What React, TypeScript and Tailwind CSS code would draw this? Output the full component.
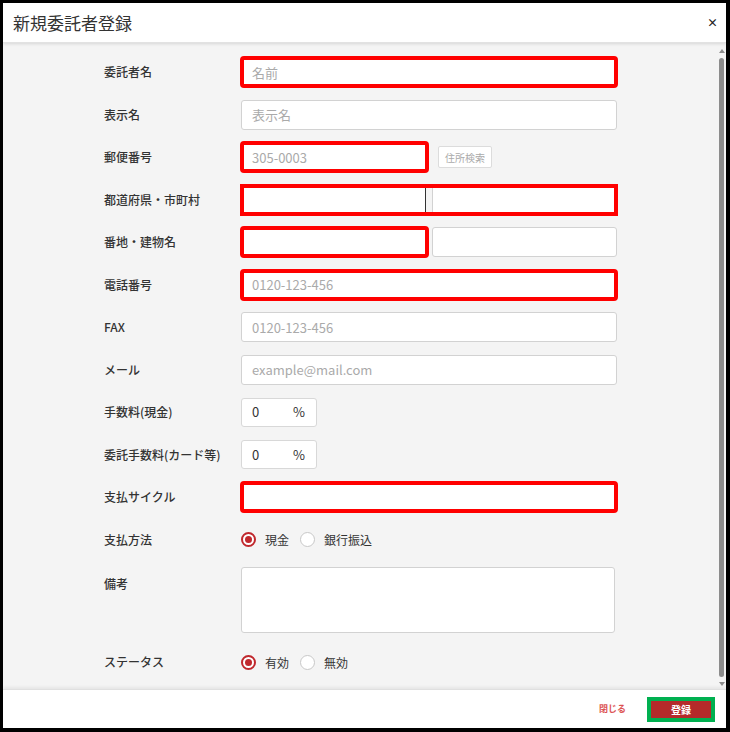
import type { ReactNode } from "react";
import clsx from "clsx";

const field =
  "h-[30px] rounded-[3px] border border-[#d2d2d2] bg-white px-[10px] text-[13px] text-[#333] placeholder:text-[#aaa] outline-none";

const marked = "outline-4 outline-solid outline-[#ff0000] outline-offset-[-3px]";

function Row({ label, children, top }: { label: string; children: ReactNode; top?: boolean }) {
  return (
    <div className={clsx("flex min-h-[30px]", top ? "items-start" : "items-center")}>
      <div
        className={clsx(
          "w-[137px] shrink-0 text-[12px] font-medium text-[#333]",
          top && "pt-[8px]"
        )}
      >
        {label}
      </div>
      {children}
    </div>
  );
}

function Radio({ checked, label }: { checked?: boolean; label: string }) {
  return (
    <label className="flex items-center gap-[9px] text-[12px] text-[#333]">
      <span
        className={clsx(
          "flex h-[15px] w-[15px] items-center justify-center rounded-full bg-white",
          checked ? "border-2 border-[#c0282d]" : "border border-[#c8c8c8]"
        )}
      >
        {checked && <span className="h-[7px] w-[7px] rounded-full bg-[#c0282d]" />}
      </span>
      {label}
    </label>
  );
}

function Percent() {
  return (
    <div className="flex h-[29px] w-[76px] items-center justify-between rounded-[3px] border border-[#d8d8d8] bg-white pl-[10px] pr-[11px] text-[13px] text-[#333]">
      <span>0</span>
      <span>%</span>
    </div>
  );
}

export default function App() {
  return (
    <div className="flex h-[732px] w-[730px] bg-black pb-[4px] pl-[3px] pr-[4px] pt-[3px] font-['Noto_Sans_CJK_JP','Noto_Sans',sans-serif]">
      <div className="flex flex-1 flex-col bg-white">
        {/* header */}
        <div className="relative z-10 flex h-[40px] shrink-0 items-center justify-between border-b border-[#e2e2e2] bg-white pl-[10px] pr-[8px] shadow-[0_1px_3px_rgba(0,0,0,0.12)]">
          <h1 className="text-[17px] text-[#333]">新規委託者登録</h1>
          <span className="text-[11px] font-bold leading-none text-[#222]">×</span>
        </div>

        {/* body */}
        <div className="flex flex-1 overflow-hidden bg-[#f4f4f4]">
          <div className="flex flex-1 flex-col gap-[12.5px] pl-[101px] pt-[14px]">
            <Row label="委託者名">
              <input className={clsx(field, marked, "w-[376px]")} placeholder="名前" />
            </Row>
            <Row label="表示名">
              <input className={clsx(field, "w-[376px]")} placeholder="表示名" />
            </Row>
            <Row label="郵便番号">
              <input className={clsx(field, marked, "w-[187px]")} placeholder="305-0003" />
              <button className="ml-[10px] h-[22px] w-[54px] rounded-[2px] border border-[#dcdcdc] bg-white text-[10px] text-[#aaa]">
                住所検索
              </button>
            </Row>
            <Row label="都道府県・市町村">
              <div className={clsx("flex w-[376px] gap-[6px]", marked)}>
                <input className={clsx(field, "w-[185px] border-r-[#333]")} />
                <input className={clsx(field, "flex-1")} />
              </div>
            </Row>
            <Row label="番地・建物名">
              <div className="flex w-[376px] gap-[4px]">
                <input className={clsx(field, marked, "w-[187px]")} />
                <input className={clsx(field, "flex-1")} />
              </div>
            </Row>
            <Row label="電話番号">
              <input className={clsx(field, marked, "w-[376px]")} placeholder="0120-123-456" />
            </Row>
            <Row label="FAX">
              <input className={clsx(field, "w-[376px]")} placeholder="0120-123-456" />
            </Row>
            <Row label="メール">
              <input className={clsx(field, "w-[376px]")} placeholder="example@mail.com" />
            </Row>
            <Row label="手数料(現金)">
              <Percent />
            </Row>
            <Row label="委託手数料(カード等)">
              <Percent />
            </Row>
            <Row label="支払サイクル">
              <input className={clsx(field, marked, "w-[376px]")} />
            </Row>
            <Row label="支払方法">
              <div className="flex h-[30px] items-center gap-[11px]">
                <Radio checked label="現金" />
                <Radio label="銀行振込" />
              </div>
            </Row>
            <Row label="備考" top>
              <textarea className="h-[66px] w-[374px] resize-none rounded-[3px] border border-[#d2d2d2] bg-white outline-none" />
            </Row>
            <Row label="ステータス">
              <div className="mt-[2px] flex h-[30px] items-center gap-[11px]">
                <Radio checked label="有効" />
                <Radio label="無効" />
              </div>
            </Row>
          </div>

          {/* scrollbar */}
          <div className="mr-[1px] flex w-[7px] shrink-0 flex-col items-center pb-[3px] pt-[6px]">
            <span className="h-0 w-0 border-x-[3px] border-b-[4px] border-x-transparent border-b-[#8c8c8c]" />
            <div className="mt-[5px] w-[5px] flex-1 rounded-full bg-[#8c8c8c]" />
            <span className="mt-[5px] h-0 w-0 border-x-[3px] border-t-[4px] border-x-transparent border-t-[#8c8c8c]" />
          </div>
        </div>

        {/* footer */}
        <div className="relative z-10 flex h-[39px] shrink-0 items-center justify-end gap-[25px] border-t border-[#e0e0e0] bg-white pr-[15px] shadow-[0_-2px_3px_rgba(0,0,0,0.06)]">
          <button className="text-[9px] font-bold text-[#dc5454]">閉じる</button>
          <button className="h-[17px] w-[60px] bg-[#b52a2a] text-[10px] font-bold text-white outline-4 outline-solid outline-[#00b050]">
            登録
          </button>
        </div>
      </div>
    </div>
  );
}
